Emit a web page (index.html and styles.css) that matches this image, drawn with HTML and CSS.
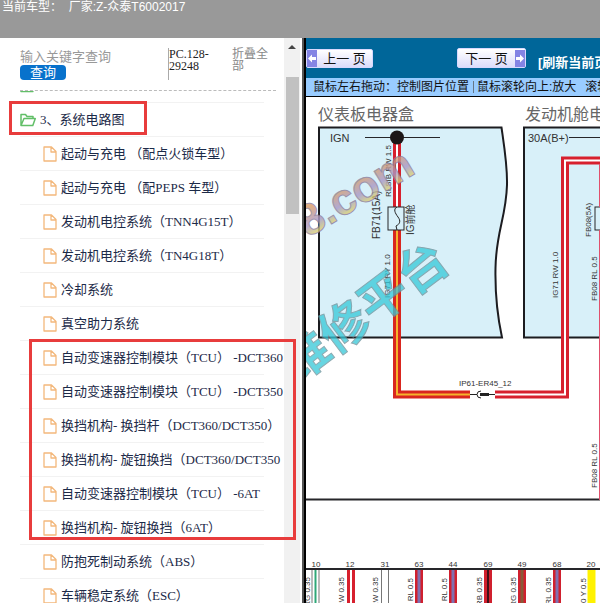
FILE: index.html
```html
<!DOCTYPE html>
<html lang="zh-CN">
<head>
<meta charset="utf-8">
<title>系统电路图</title>
<link rel="stylesheet" href="styles.css">
</head>
<body>
<svg class="defs" width="0" height="0" aria-hidden="true">
  <symbol id="folder" viewBox="0 0 16 14">
    <path d="M1 12.500V1.500H5.500L7 3.500H13V5.500M1 12.500L4 5.500H15.300L12.800 12.500Z" fill="none" stroke="#62bf68" stroke-width="1.500" stroke-linejoin="round"/>
  </symbol>
  <symbol id="file" viewBox="0 0 14 16">
    <path d="M1 1H8.500L13 5.500V15H1ZM8 1V6H13" fill="none" stroke="#f3b87c" stroke-width="1.300" stroke-linejoin="round"/>
  </symbol>
</svg>
<header class="topbar">当前车型：&nbsp; 厂家:Z-众泰T6002017</header>
<div class="workspace">
  <aside class="sidebar">
    <div class="panel">
      <form class="search">
        <div class="query">
          <input class="keyword" type="text" aria-label="输入关键字查询" placeholder="输入关键字查询">
          <button class="submit" type="button">查询</button>
        </div>
        <div class="code">PC.128-29248</div>
        <a class="collapse" href="#">折叠全部</a>
      </form>
      <nav class="tree">
        <div class="row previous"><svg class="folder"><use href="#folder"/></svg></div>
        <a class="row" href="#"><svg class="folder"><use href="#folder"/></svg>3、系统电路图</a>
        <a class="row leaf" href="#"><svg class="file"><use href="#file"/></svg>起动与充电 （配点火锁车型）</a>
        <a class="row leaf" href="#"><svg class="file"><use href="#file"/></svg>起动与充电 （配PEPS 车型）</a>
        <a class="row leaf" href="#"><svg class="file"><use href="#file"/></svg>发动机电控系统（TNN4G15T）</a>
        <a class="row leaf" href="#"><svg class="file"><use href="#file"/></svg>发动机电控系统（TN4G18T）</a>
        <a class="row leaf" href="#"><svg class="file"><use href="#file"/></svg>冷却系统</a>
        <a class="row leaf" href="#"><svg class="file"><use href="#file"/></svg>真空助力系统</a>
        <a class="row leaf" href="#"><svg class="file"><use href="#file"/></svg>自动变速器控制模块（TCU） -DCT360</a>
        <a class="row leaf" href="#"><svg class="file"><use href="#file"/></svg>自动变速器控制模块（TCU） -DCT350</a>
        <a class="row leaf" href="#"><svg class="file"><use href="#file"/></svg>换挡机构- 换挡杆（DCT360/DCT350）</a>
        <a class="row leaf" href="#"><svg class="file"><use href="#file"/></svg>换挡机构- 旋钮换挡（DCT360/DCT350</a>
        <a class="row leaf" href="#"><svg class="file"><use href="#file"/></svg>自动变速器控制模块（TCU） -6AT</a>
        <a class="row leaf" href="#"><svg class="file"><use href="#file"/></svg>换挡机构- 旋钮换挡（6AT）</a>
        <a class="row leaf" href="#"><svg class="file"><use href="#file"/></svg>防抱死制动系统（ABS）</a>
        <a class="row leaf" href="#"><svg class="file"><use href="#file"/></svg>车辆稳定系统（ESC）</a>
      </nav>
    </div>
    <div class="scrollbar" aria-hidden="true"><span class="arrow"></span><span class="thumb"></span></div>
    <div class="mark mark-chapter"></div>
    <div class="mark mark-group"></div>
  </aside>
  <main class="viewer">
    <div class="toolbar">
      <button class="page prev" type="button"><svg class="arrowbox" viewBox="0 0 10 17"><path d="M1 8.500L5 4.500V7H9V10H5V12.500Z" fill="#fff"/></svg><span>上一 页</span></button>
      <button class="page next" type="button"><span>下一 页</span><svg class="arrowbox" viewBox="0 0 10 17"><path d="M9 8.500L5 4.500V7H1V10H5V12.500Z" fill="#fff"/></svg></button>
      <a class="refresh" href="#">[刷新当前页]</a>
    </div>
    <div class="hint"><span>鼠标左右拖动：控制图片位置</span><i class="bar"></i><span>鼠标滚轮向上:放大</span><span class="zoomout">滚轮向下:缩小</span></div>
    <svg class="diagram" width="294" height="506" viewBox="306 97 294 506" role="img" aria-label="系统电路图">
      <defs>
        <linearGradient id="gold" x1="0" y1="0" x2="0" y2="1">
          <stop offset=".3" stop-color="#d89a68"/><stop offset=".6" stop-color="#a898c8"/><stop offset=".85" stop-color="#e4dc60"/>
        </linearGradient>
      </defs>
      <g class="title"><text x="318" y="120">仪表板电器盒</text><text x="525" y="120">发动机舱电器盒</text></g>
      <g fill="#d8f0f9" stroke="#1c1c20" stroke-width="2">
        <path d="M319 127.500H501.500C504 145 507.500 165 507 185C506 218 496 232 495.500 268C495 293 498 319 502 337.500H319Z"/>
        <path d="M610 127.500H524V337.500H610"/>
      </g>
      <g fill="none" stroke="#26262a">
        <path d="M365 137.500H440M569 137.500H600"/>
        <path d="M306 499.500H600M306 569H600" stroke-width="2"/>
      </g>
      <path d="M397 140V208" stroke="#d7202e" stroke-width="8"/><path d="M397 140V208" stroke="#fff" stroke-width="2"/>
      <circle cx="397" cy="137.500" r="7" fill="#1c1718"/>
      <g fill="none">
        <path d="M397 229V394.500H470" stroke="#d9261f" stroke-width="8"/><path d="M397 229V394.500H470" stroke="#f5b42c" stroke-width="2"/>
        <path d="M495 394.500H565V160.500H600" stroke="#d7202e" stroke-width="8"/><path d="M495 394.500H565V160.500H600" stroke="#fff" stroke-width="2"/>
      </g>
      <g fill="#d8f0f9" stroke="#26262a"><rect x="388" y="207" width="16" height="23"/><rect x="595" y="207" width="16" height="23"/></g>
      <path d="M599.500 164V207M599.500 230V500" stroke="#e0506c"/>
      <path d="M397 207C393 209 395 213 398 217C401 221 400 224 396 226L397 230" fill="none" stroke="#222"/>
      <g fill="none" stroke="#222"><path d="M470 394.500H477M488 394.500H495M481 391Q477 391 477 394.500T481 398"/><path d="M480 394.500H489" stroke-width="3"/></g>
      <g class="large"><text x="330" y="142">IGN</text><text x="528" y="142">30A(B+)</text></g>
      <g class="medium"><text transform="translate(380 239) rotate(-90)">FB71(15A)</text><text transform="translate(414 235) rotate(-90)">IG前舱</text></g>
      <g class="small">
        <text transform="translate(391 197) rotate(-90)">RLSIB RW 1.5</text>
        <text transform="translate(390 298) rotate(-90)">IG71 RY 1.0</text>
        <text transform="translate(558 298) rotate(-90)">IG71 RW 1.0</text>
        <text transform="translate(591 237) rotate(-90)">FB08(5A)</text>
        <text transform="translate(597 301) rotate(-90)">FB08 RL 0.5</text>
        <text transform="translate(597 488) rotate(-90)">FB08 RL 0.5</text>
        <text x="459" y="386">IP61-ER45_12</text>
      </g>
      <g class="small pins">
        <text x="316" y="567">10</text><text x="350" y="567">12</text><text x="385" y="567">31</text><text x="419" y="567">63</text><text x="453" y="567">44</text><text x="488" y="567">69</text><text x="522" y="567">49</text><text x="557" y="567">68</text><text x="591" y="567">20</text>
      </g>
      <g stroke-width="8">
        <path d="M315.500 570V603" stroke="#777"/><path d="M315.500 570V603" stroke="#fff" stroke-width="6"/><path d="M315.500 570V603" stroke="#2fa878" stroke-width="2"/>
        <path d="M351 570V603" stroke="#d7202e"/><path d="M351 570V603" stroke="#fff" stroke-width="2"/>
        <path d="M385 570V603" stroke="#777"/><path d="M385 570V603" stroke="#fff" stroke-width="6"/>
        <path d="M419 570V603M453 570V603M488 570V603M522 570V603M557 570V603" stroke="#d0202e"/>
        <path d="M419 570V603M453 570V603M557 570V603" stroke="#8070b0" stroke-width="3"/>
        <path d="M488 570V603" stroke="#401018" stroke-width="2"/><path d="M522 570V603" stroke="#8a5a38" stroke-width="3"/>
        <path d="M591.500 570V603" stroke="#fff200"/>
      </g>
      <g class="small wires">
        <text transform="translate(310 577) rotate(-90)">RG 0.35</text><text transform="translate(344 577) rotate(-90)">RW 0.35</text><text transform="translate(378 577) rotate(-90)">RW 0.35</text><text transform="translate(413 578) rotate(-90)">RL 0.5</text><text transform="translate(447 578) rotate(-90)">RL 0.5</text><text transform="translate(482 577) rotate(-90)">RB 0.35</text><text transform="translate(516 577) rotate(-90)">RG 0.35</text><text transform="translate(551 577) rotate(-90)">RL 0.35</text><text transform="translate(586 578) rotate(-90)">20 Y 0.5</text>
      </g>
      <g class="site"><text transform="translate(308 238) rotate(-31)">8.com</text></g>
      <g class="brand"><text transform="translate(296 385) rotate(-37)">维修平台</text></g>
    </svg>
  </main>
</div>
</body>
</html>
```
FILE: styles.css
```css
* { box-sizing: border-box; }
body {
  margin: 0;
  height: 100vh;
  display: flex;
  flex-direction: column;
  overflow: hidden;
  background: #fff;
  font-family: "Liberation Serif", "Noto Sans CJK SC", serif;
  font-size: 13px;
}
a { color: inherit; text-decoration: none; }
button, input { font: inherit; border: 0; padding: 0; margin: 0; background: none; }
.defs { position: absolute; }

.topbar {
  flex: none;
  height: 38px;
  padding-left: 2px;
  background: #999;
  color: #fff;
  font: 12px/14px "Liberation Sans", "Noto Sans CJK SC", sans-serif;
}
.workspace { flex: 1; min-height: 0; display: flex; }

.sidebar { position: relative; flex: none; width: 302px; display: flex; padding-right: 2px; }
.panel { flex: 1; min-width: 0; display: flex; flex-direction: column; }
.search {
  flex: none;
  height: 53px;
  margin: 0 8px 0 20px;
  padding-top: 10px;
  display: grid;
  grid-template-columns: 148px 64px 40px;
  align-items: start;
  border-bottom: 1px dashed #bbb;
  font-size: 12px;
  line-height: 12px;
}
.query { display: flex; flex-direction: column; align-items: flex-start; padding-top: 1px; }
.keyword { width: 120px; height: 16px; font-size: 13px; }
.keyword::placeholder { color: #999; opacity: 1; }
.submit {
  width: 46px;
  height: 15px;
  border-radius: 4px;
  background: #0872cc;
  color: #fff;
  font-size: 13px;
  line-height: 14px;
}
.code { width: 48px; border-left: 1px solid #aaa; padding-bottom: 8px; color: #222; }
.collapse { width: 36px; color: #888; }

.tree { flex: 1; min-height: 0; overflow: hidden; padding-left: 20px; color: #1c2a48; }
.row {
  height: 34px;
  display: flex;
  align-items: center;
  gap: 4px;
  margin-right: 20px;
  border-bottom: 1px solid #f2f2f2;
  line-height: 18px;
  white-space: nowrap;
}
.previous { height: 12px; overflow: hidden; align-items: flex-start; }
.previous .folder { margin-top: -12px; }
.leaf { padding-left: 23px; }
.folder { flex: none; width: 16px; height: 14px; }
.file { flex: none; width: 14px; height: 16px; }

.scrollbar {
  flex: none;
  width: 16px;
  background: #f1f1f1;
  display: flex;
  flex-direction: column;
  align-items: center;
}
.arrow { margin-top: 7px; border: 4px solid transparent; border-top: 0; border-bottom: 4px solid #444; }
.thumb { width: 13px; height: 137px; margin-top: 28px; background: #c1c1c1; }

.mark { position: absolute; border: 3px solid #e83c3c; pointer-events: none; }
.mark-chapter { left: 9px; top: 63px; width: 138px; height: 34px; }
.mark-group { left: 29px; top: 301px; width: 267px; height: 201px; }

.viewer {
  flex: 1;
  min-width: 0;
  overflow: hidden;
  border-left: 2px solid #555;
  box-shadow: inset 2px 0 #000;
  padding-left: 2px;
}
.toolbar { height: 40px; display: flex; align-items: flex-start; background: #069; white-space: nowrap; }
.page {
  flex: none;
  display: flex;
  align-items: center;
  height: 19px;
  border: 1px solid #d8d8ff;
  border-radius: 2px;
  background: linear-gradient(#fff, #dcdcfa);
  color: #111;
  font-family: "Liberation Sans", "Noto Sans CJK SC", sans-serif;
  line-height: 17px;
}
.page span { flex: 1; text-align: center; }
.prev { width: 67px; margin-top: 11px; }
.next { width: 69px; height: 20px; margin: 10px 0 0 84px; }
.arrowbox { flex: none; width: 10px; height: 17px; background: #8484e4; }
.refresh {
  margin: 16px 0 0 12px;
  color: #fff;
  font: bold 13px/18px "Liberation Sans", "Noto Sans CJK SC", sans-serif;
}
.hint {
  height: 19px;
  display: flex;
  align-items: center;
  padding-left: 7px;
  border-bottom: 1px solid #000;
  background: #9cf;
  color: #111;
  font: 12px/18px "Liberation Sans", "Noto Sans CJK SC", sans-serif;
  white-space: nowrap;
}
.hint > * { flex: none; }
.bar { width: 1px; height: 12px; margin: 0 3px 0 4px; background: #678; }
.zoomout { margin-left: 9px; }

.diagram { display: block; font-family: "Liberation Sans", "Noto Sans CJK SC", sans-serif; fill: #333; }
.title { font-size: 16px; fill: #666; }
.large { font-size: 11px; }
.medium { font-size: 10px; }
.small { font-size: 8px; }
.pins { text-anchor: middle; }
.wires { text-anchor: end; }
.site { font-size: 44px; font-weight: bold; fill: url(#gold); stroke: #8c7c98; stroke-width: 1px; opacity: .8; }
.brand { font-size: 49px; font-weight: bold; fill: #35c8d8; stroke: #6a8f98; stroke-width: 1px; opacity: .75; }
```
